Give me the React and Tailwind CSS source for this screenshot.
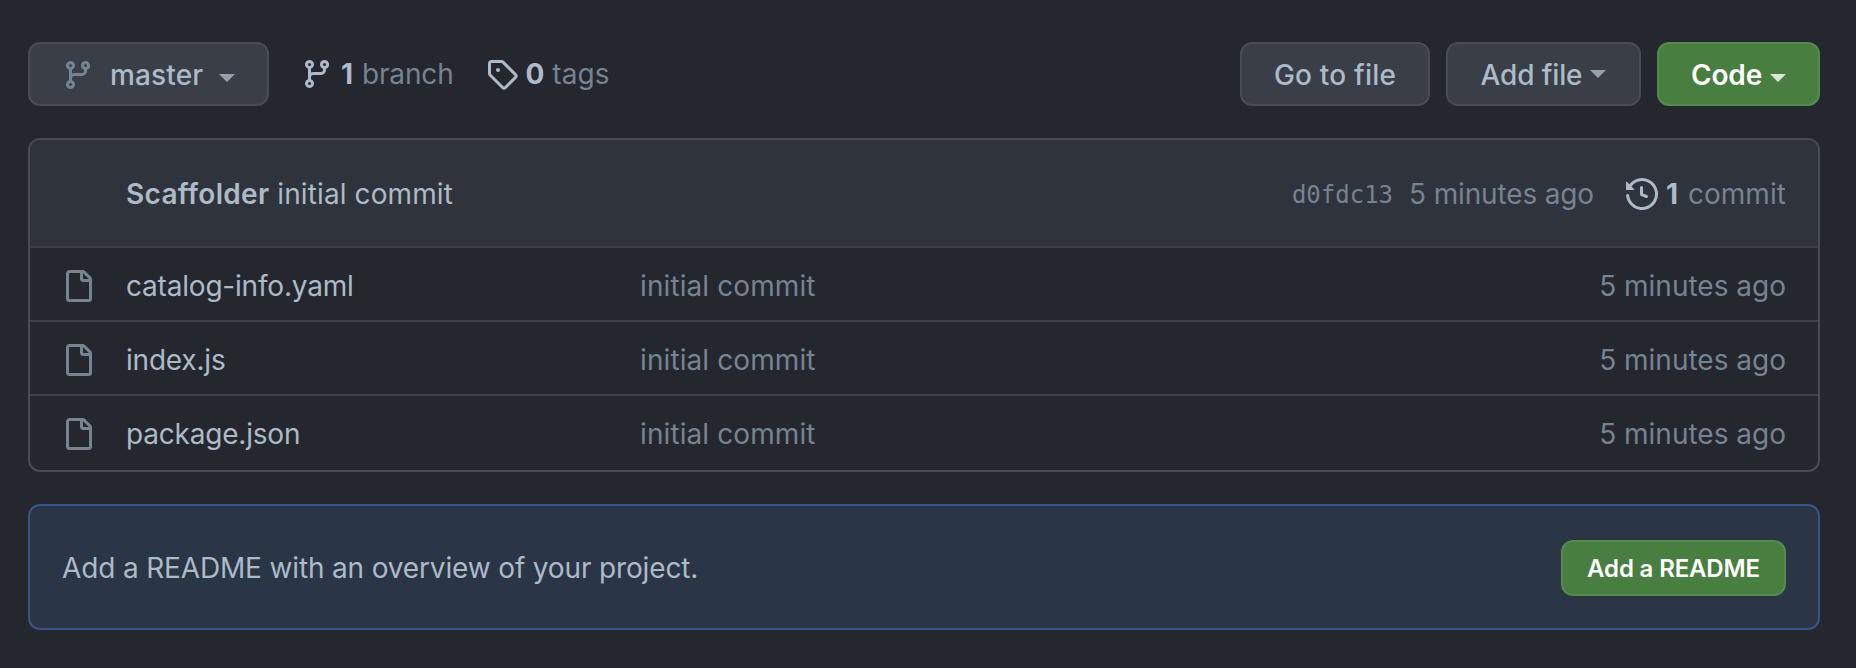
const PATHS = {
  branch:
    "M11.75 2.5a.75.75 0 100 1.5.75.75 0 000-1.5zm-2.25.75a2.25 2.25 0 113 2.122V6A2.5 2.5 0 0110 8.5H6a1 1 0 00-1 1v1.128a2.251 2.251 0 11-1.5 0V5.372a2.25 2.25 0 111.5 0v1.836A2.492 2.492 0 016 7h4a1 1 0 001-1v-.628A2.25 2.25 0 019.5 3.25zM4.25 12a.75.75 0 100 1.5.75.75 0 000-1.5zM3.5 3.25a.75.75 0 111.5 0 .75.75 0 01-1.5 0z",
  tag: "M2.5 7.775V2.75a.25.25 0 01.25-.25h5.025a.25.25 0 01.177.073l6.25 6.25a.25.25 0 010 .354l-5.025 5.025a.25.25 0 01-.354 0l-6.25-6.25a.25.25 0 01-.073-.177zm-1.5 0V2.75C1 1.784 1.784 1 2.75 1h5.025c.464 0 .91.184 1.238.513l6.25 6.25a1.75 1.75 0 010 2.474l-5.026 5.026a1.75 1.75 0 01-2.474 0l-6.25-6.25A1.75 1.75 0 011 7.775zM6 5a1 1 0 100 2 1 1 0 000-2z",
  history:
    "M1.643 3.143L.427 1.927A.25.25 0 000 2.104V5.75c0 .138.112.25.25.25h3.646a.25.25 0 00.177-.427L2.715 4.215a6.5 6.5 0 11-1.18 4.458.75.75 0 10-1.493.154 8.001 8.001 0 101.6-5.684zM7.75 4a.75.75 0 01.75.75v2.992l2.028.812a.75.75 0 01-.557 1.392l-2.5-1A.75.75 0 017 8.25v-3.5A.75.75 0 017.75 4z",
  file: "M2 1.75C2 .784 2.784 0 3.75 0h6.586c.464 0 .909.184 1.237.513l2.914 2.914c.329.328.513.773.513 1.237v9.586A1.75 1.75 0 0113.25 16h-9.5A1.75 1.75 0 012 14.25zm1.75-.25a.25.25 0 00-.25.25v12.5c0 .138.112.25.25.25h9.5a.25.25 0 00.25-.25V6h-2.75A1.75 1.75 0 019 4.25V1.5zm6.75.062V4.25c0 .138.112.25.25.25h2.688l-.011-.013-2.914-2.914-.013-.011z",
};

function Icon({ name, className = "" }) {
  return (
    <svg viewBox="0 0 16 16" className={`size-8 shrink-0 ${className}`} fill="currentColor" fillRule="evenodd" aria-hidden="true">
      <path d={PATHS[name]} />
    </svg>
  );
}

function Caret({ className = "" }) {
  return (
    <svg viewBox="0 0 16 8" className={`h-2 w-4 shrink-0 ${className}`} fill="currentColor" aria-hidden="true">
      <path d="M0 0h16L8 8z" />
    </svg>
  );
}

function Button({ className = "", children }) {
  return (
    <button className={`flex h-16 shrink-0 items-center whitespace-nowrap rounded-xl border-2 pt-0.5 font-medium ${className}`}>
      {children}
    </button>
  );
}

const files = ["catalog-info.yaml", "index.js", "package.json"];

export default function App() {
  return (
    <div className="flex h-[668px] w-[1856px] flex-col bg-[#24272e] pt-[42px] pr-9 pl-7 font-['Inter',sans-serif] text-[28px] leading-[42px] tracking-[-0.15px] text-[#adbac7] [font-variant-ligatures:none]">
      <div className="flex items-center">
        <Button className="w-[241px] border-[#474c55] bg-[#393e47] pl-8">
          <Icon name="branch" className="text-[#768390]" />
          <span className="ml-4 tracking-[0.15px]">master</span>
          <Caret className="mt-1.5 ml-4 opacity-80" />
        </Button>
        <div className="ml-8 flex items-center">
          <Icon name="branch" />
          <span className="ml-2 font-bold">1</span>
          <span className="ml-[9px] text-[#768390]">branch</span>
        </div>
        <div className="ml-8 flex items-center">
          <Icon name="tag" />
          <span className="ml-2 font-bold">0</span>
          <span className="ml-2 tracking-[0.1px] text-[#768390]">tags</span>
        </div>
        <div className="ml-auto flex gap-4">
          <Button className="w-[190px] justify-center border-[#474c55] bg-[#393e47] tracking-[0.2px]">Go to file</Button>
          <Button className="w-[195px] justify-center border-[#474c55] bg-[#393e47]">
            Add file
            <Caret className="mb-0.5 ml-2 opacity-80" />
          </Button>
          <Button className="w-[163px] justify-center border-[#56894f] bg-[#487e40] text-white">
            <span className="font-semibold">Code</span>
            <Caret className="mt-1.5 ml-2 opacity-80" />
          </Button>
        </div>
      </div>

      <div className="mt-8 flex h-[334px] flex-col overflow-hidden rounded-xl border-2 border-[#464b54]">
        <div className="flex h-[108px] items-center border-b-2 border-[#3b4049] bg-[#2f333b] pt-0.5 pr-8 pl-24">
          <span className="font-semibold tracking-[0.3px]">Scaffolder</span>
          <span className="ml-2 tracking-[0.1px]">initial commit</span>
          <span className="ml-auto pt-0.5 font-['DejaVu_Sans_Mono',monospace] text-2xl tracking-normal text-[#768390]">d0fdc13</span>
          <span className="ml-4 text-[#768390]">5 minutes ago</span>
          <Icon name="history" className="ml-8" />
          <span className="ml-2 font-bold">1</span>
          <span className="ml-[10px] tracking-[0.05px] text-[#768390]">commit</span>
        </div>
        {files.map((file) => (
          <div key={file} className="flex h-[74px] items-center border-b-2 border-[#3b4049] pt-1 pr-8 pl-8 text-[#768390] last:border-b-0 last:pb-0.5">
            <Icon name="file" />
            <span className="ml-8 w-[514px] tracking-[-0.2px] text-[#adbac7]">{file}</span>
            <span className="tracking-[0.1px]">initial commit</span>
            <span className="ml-auto tracking-[0px]">5 minutes ago</span>
          </div>
        ))}
      </div>

      <div className="mt-8 flex h-[126px] items-center justify-between rounded-xl border-2 border-[#395489] bg-[#2a3546] px-8 pt-0.5">
        <span>Add a README with an overview of your project.</span>
        <button className="h-14 w-[225px] rounded-xl border-2 border-[#56894f] bg-[#487e40] pt-0.5 text-2xl font-semibold text-white">
          Add a README
        </button>
      </div>
    </div>
  );
}
